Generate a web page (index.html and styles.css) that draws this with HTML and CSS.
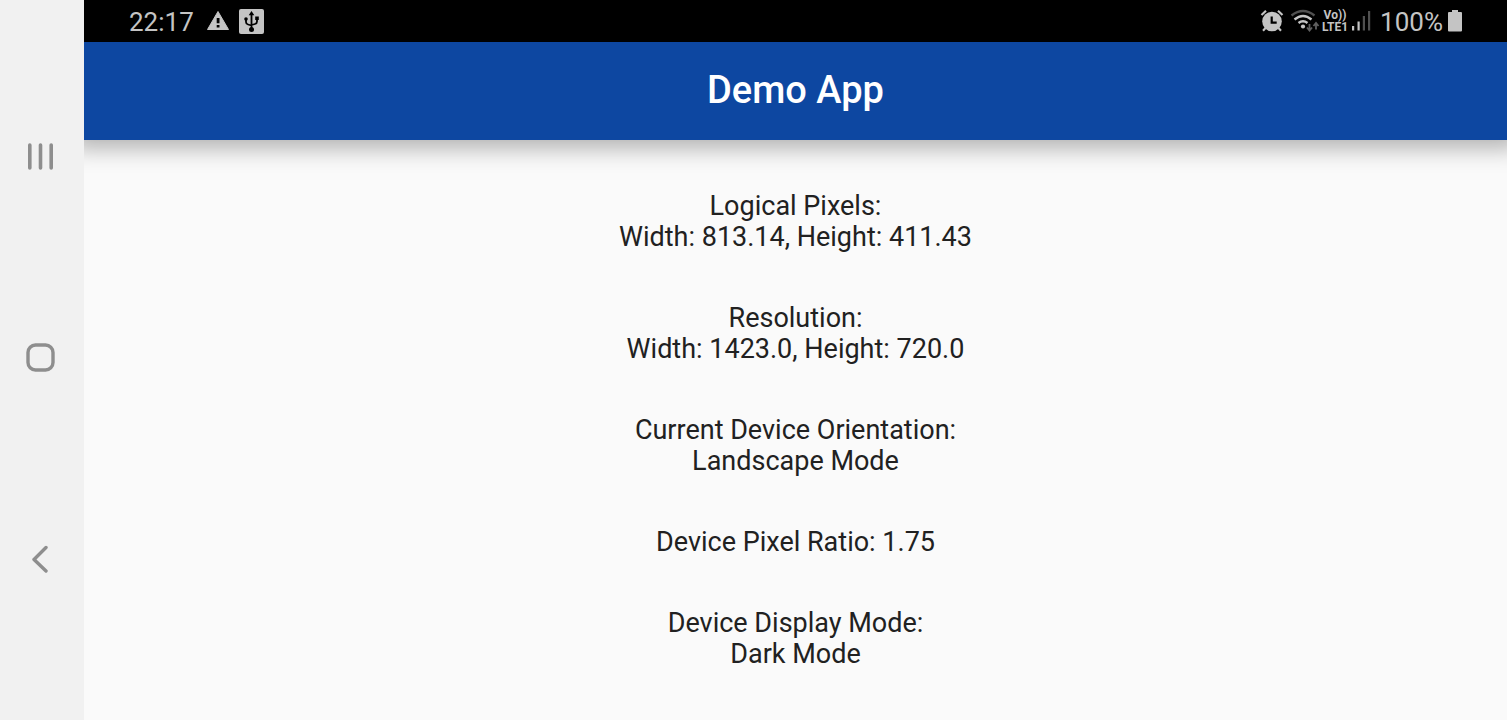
FILE: index.html
```html
<!DOCTYPE html>
<html lang="en">
<head>
<meta charset="utf-8">
<title>Demo App</title>
<link rel="stylesheet" href="styles.css">
</head>
<body>
<div class="screen">
  <nav class="navbar" aria-label="System navigation">
    <button class="nav-button" aria-label="Recent apps">
      <svg width="28" height="28" viewBox="0 0 28 28"><path d="M3.800 2v23M14.500 2v23M25.200 2v23" stroke-width="3.600"/></svg>
    </button>
    <button class="nav-button" aria-label="Home">
      <svg width="30" height="30" viewBox="0 0 30 30"><rect x="3" y="2" width="25" height="25" rx="7.500" stroke-width="3.400"/></svg>
    </button>
    <button class="nav-button" aria-label="Back">
      <svg width="28" height="28" viewBox="0 0 28 28"><path d="M20 2.500L8 14.500L20 26" stroke-width="3.400"/></svg>
    </button>
  </nav>
  <div class="device">
    <div class="status">
      <div class="status-group">
        <span class="clock">22:17</span>
        <svg class="warning" width="24" height="22" viewBox="0 0 24 22"><path d="M12 1.500L22.500 19.500H1.500Z" fill="#c4c4c4" stroke="#c4c4c4" stroke-linejoin="round"/><path d="M10.700 8h2.800v5.200h-2.800zM10.700 15h2.800v2.500h-2.800z" fill="#000"/></svg>
        <svg width="25" height="25" viewBox="0 0 25 25"><rect width="25" height="25" rx="2" fill="#c4c4c4"/><g fill="none" stroke="#000" stroke-width="1.800"><path d="M12.500 5v16M7 10v3q0 2 2 2.500l3.500 1M18 9v3.500q0 2-2 2.500l-3.500 1"/></g><path d="M12.500 2l2.800 4.200h-5.600zM16.200 7.500h3.600v3.600h-3.600z"/><circle cx="7" cy="10" r="1.800"/><circle cx="12.500" cy="20.500" r="2.500"/></svg>
      </div>
      <div class="status-group">
        <svg width="24" height="24" viewBox="0 0 24 24"><circle cx="12" cy="12.500" r="9.800" fill="#c4c4c4"/><path d="M1.500 6L6 1.800M22.500 6L18 1.800M5.500 19L3 21.700M18.500 19L21 21.700" stroke="#c4c4c4" stroke-width="2.200"/><path d="M11.700 7.500v6.200h5" fill="none" stroke="#000" stroke-width="2.200"/></svg>
        <svg class="wifi" width="30" height="24" viewBox="0 0 30 24"><g fill="none" stroke-width="2.400"><path d="M1.500 6.500Q13-2.500 24.500 6.500" stroke="#505050"/><path d="M4.500 10.500Q13 3.500 21.500 10.500M8.500 14Q13 10.500 17.500 14" stroke="#c4c4c4"/></g><circle cx="13" cy="17.500" r="2.100" fill="#c4c4c4"/><path d="M19.500 15v6M17 18.500l2.500 3 2.500-3M26 20.500v-6M23.500 17l2.500-3 2.500 3" fill="none" stroke="#606060" stroke-width="1.800"/></svg>
        <span class="volte"><span>Vo))</span><span>LTE1</span></span>
        <svg class="signal" width="20" height="22" viewBox="0 0 20 22"><path d="M0 16h2.200v4.500H0zM5.500 11.500h2.200v9h-2.200z" fill="#c4c4c4"/><path d="M10.800 6h2.200v14.500h-2.200zM16 1h2.200v19.500h-2.200z" fill="#505050"/></svg>
        <span class="battery-level">100%</span>
        <svg width="14" height="22" viewBox="0 0 14 22"><path d="M4 0h6v2h3q1 0 1 1v17.500q0 1-1 1H1q-1 0-1-1V3q0-1 1-1h3z" fill="#c4c4c4"/></svg>
      </div>
    </div>
    <header class="appbar"><h1>Demo App</h1></header>
    <main class="content">
      <p>Logical Pixels:<br>Width: 813.14, Height: 411.43</p>
      <p>Resolution:<br>Width: 1423.0, Height: 720.0</p>
      <p>Current Device Orientation:<br>Landscape Mode</p>
      <p>Device Pixel Ratio: 1.75</p>
      <p>Device Display Mode:<br>Dark Mode</p>
    </main>
  </div>
</div>
</body>
</html>
```
FILE: styles.css
```css
* { box-sizing: border-box; }
body { margin: 0; font-family: Roboto, sans-serif; background: #fafafa; color: #212121; }
svg { display: block; flex: none; }
.screen { display: flex; min-height: 100vh; }
.navbar {
  flex: none;
  z-index: 1;
  width: 84px;
  padding: 56px 4px 60px 0;
  background: #f1f1f1;
  display: flex;
  flex-direction: column;
  justify-content: space-around;
}
.nav-button {
  display: flex;
  align-items: center;
  justify-content: center;
  height: 64px;
  padding: 0;
  border: 0;
  background: none;
}
.nav-button svg { fill: none; stroke: #8e8e8e; stroke-linecap: round; stroke-linejoin: round; }
.device { flex: 1; display: flex; flex-direction: column; }
.status {
  height: 42px;
  padding: 0 45px;
  background: #000;
  color: #c4c4c4;
  font-size: 26px;
  display: flex;
  align-items: center;
  justify-content: space-between;
  z-index: 1;
}
.status-group { display: flex; align-items: center; }
.clock, .battery-level { line-height: 32px; padding-top: 2px; }
.warning { margin: 0 9px 0 12px; }
.wifi { margin: 0 2px 0 6px; }
.volte { display: flex; flex-direction: column; align-items: center; font-size: 12px; line-height: 12px; font-weight: 700; }
.signal { margin: 0 8px 0 4px; }
.battery-level { margin-right: 5px; }
.appbar {
  height: 98px;
  padding-bottom: 2px;
  background: #0d47a1;
  color: #fff;
  display: flex;
  align-items: center;
  justify-content: center;
  box-shadow: 0 -4px 22px 12px rgba(0, 0, 0, .3);
}
.appbar h1 { margin: 0; font-size: 38px; line-height: 46px; font-weight: 500; }
.content {
  padding: 51px 16px 40px;
  display: flex;
  flex-direction: column;
  gap: 50px;
  text-align: center;
  font-size: 27px;
  line-height: 31px;
}
.content p { margin: 0; }
```
